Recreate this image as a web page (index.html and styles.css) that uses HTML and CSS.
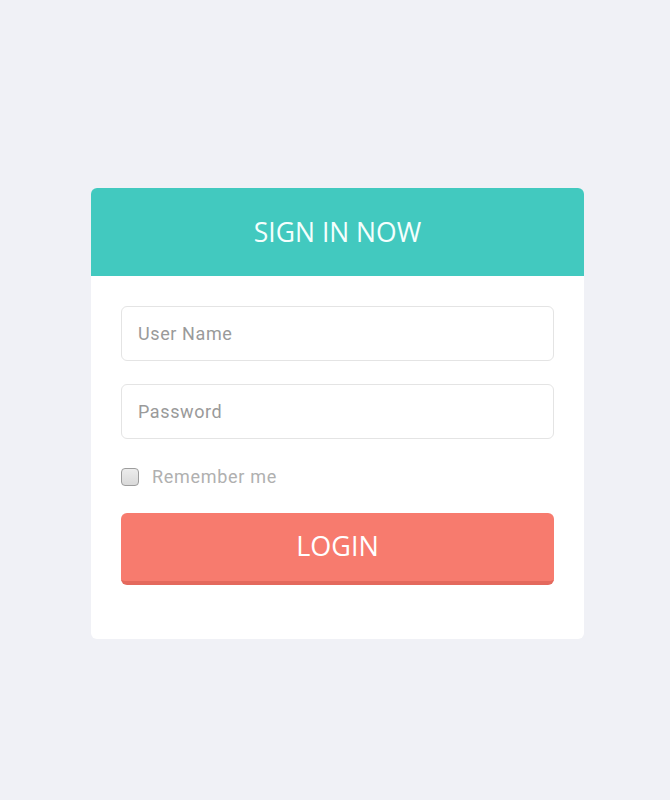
FILE: index.html
```html
<!DOCTYPE html>
<html lang="en">
<head>
<meta charset="UTF-8" />
<meta name="viewport" content="width=device-width, initial-scale=1" />
<title>Sign In</title>
<link rel="stylesheet" href="styles.css">
</head>
<body>
<div class="login-card">
  <div class="login-head">SIGN IN NOW</div>
  <form class="login-form">
    <input class="field" type="text" placeholder="User Name" />
    <input class="field" type="password" placeholder="Password" />
    <label class="remember">
      <input class="check" type="checkbox" />
      <span>Remember me</span>
    </label>
    <button class="login-btn" type="button">LOGIN</button>
  </form>
</div>
</body>
</html>
```

FILE: styles.css
```css
* { box-sizing: border-box; }
body, html {
  margin: 0; padding: 0;
  height: 100%;
  background: #f0f1f6;
}
body {
  padding: 188px 0 0 91px;
}
.login-card {
  width: 493px;
  background: #fff;
  border-radius: 6px;
  overflow: hidden;
}
.login-head {
  height: 88px;
  background: #42c9bf;
  color: #f4fffd;
  font-family: 'Open Sans', sans-serif;
  font-size: 26.5px;
  display: flex; justify-content: center; align-items: center;
}
.login-form {
  padding: 30px 30px 54px;
  display: flex;
  flex-direction: column;
}
.field {
  height: 55px;
  border: 1px solid #e4e4e4;
  border-radius: 6px;
  padding: 0 16px;
  font-family: Roboto, sans-serif;
  font-size: 18px;
  letter-spacing: 0.6px;
  color: #555;
  outline: none;
  margin-bottom: 23px;
}
.field::placeholder { color: #9a9a9a; }
.remember {
  display: flex; align-items: center;
  gap: 13px;
  margin: 4px 0 26px;
  font-family: Roboto, sans-serif;
  font-size: 18px;
  letter-spacing: 0.7px;
  color: #b0b0b0;
}
.check {
  appearance: none;
  margin: 0;
  width: 18px; height: 18px;
  border: 1px solid #9d9d9d;
  border-radius: 4px;
  background: linear-gradient(#ececec, #d9d9d9);
}
.login-btn {
  height: 72px;
  border: none;
  border-bottom: 4px solid #e4695d;
  border-radius: 6px;
  background: #f77b6e;
  color: #fff;
  font-family: 'Open Sans', sans-serif;
  font-size: 27px;
  cursor: pointer;
  padding: 0 0 3px;
}
```
